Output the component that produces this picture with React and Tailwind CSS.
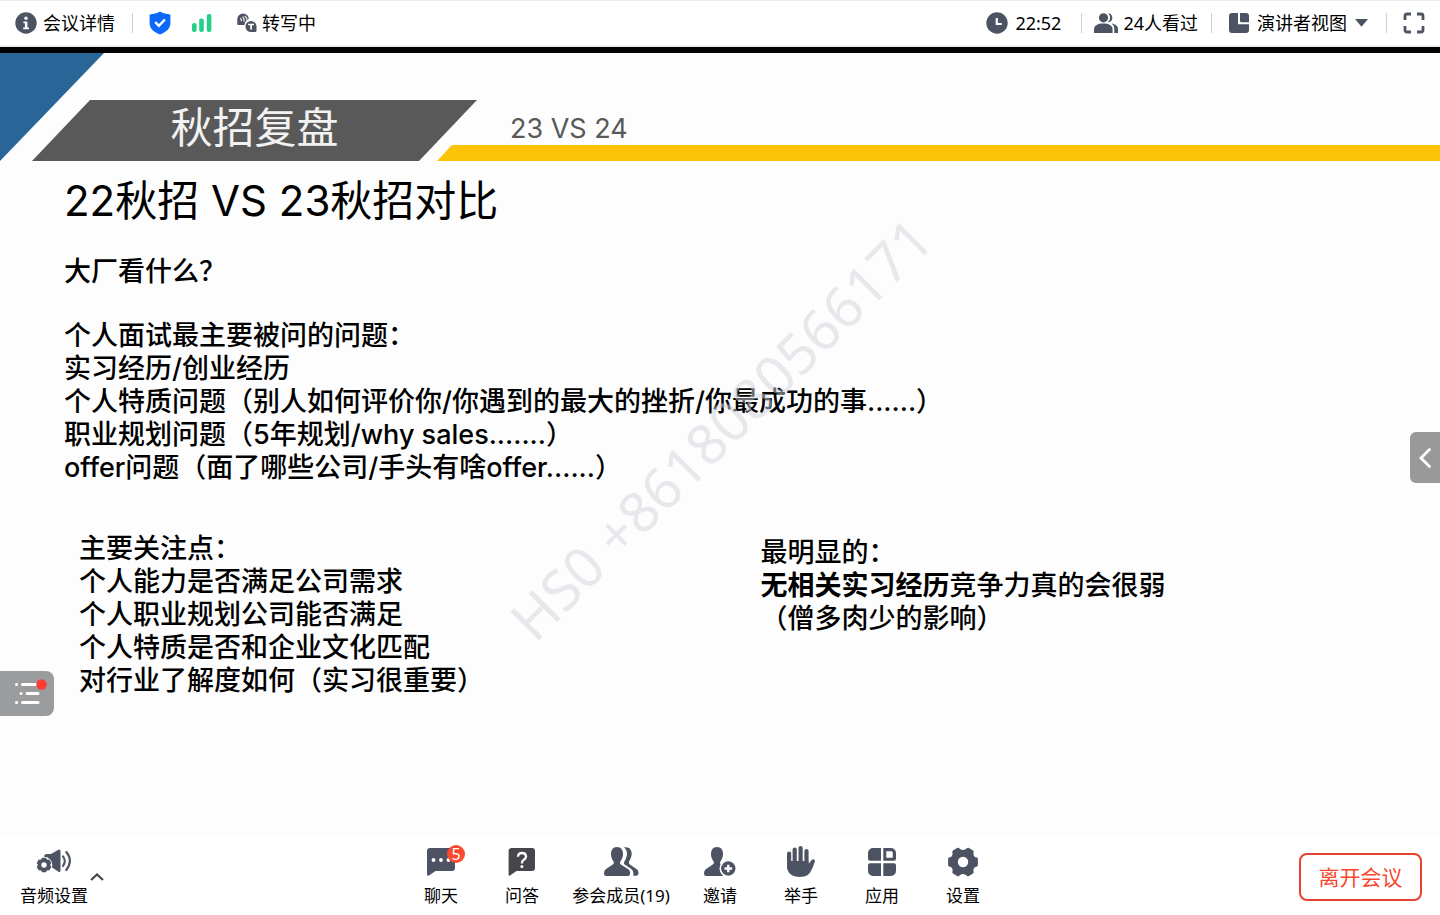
const ink = '#4d5362'

function InfoIcon() {
  return (
    <svg width="22" height="22" viewBox="0 0 22 22" aria-hidden="true">
      <circle cx="11" cy="11" r="10.7" fill={ink} />
      <circle cx="11" cy="6.3" r="1.7" fill="#fff" />
      <path d="M8.4 9.4h4v6h1.6v1.8H8.2v-1.8h1.7v-4.2H8.4z" fill="#fff" />
    </svg>
  )
}

function ShieldIcon() {
  return (
    <svg width="22" height="24" viewBox="0 0 22 24" aria-hidden="true">
      <path d="M11 .5C8.200 2.300 4.500 3.200 1.500 3.300Q.6 3.400.6 4.300V12c0 6 4.200 9 10.400 11.500C17.200 21 21.400 18 21.400 12V4.300q0-.9-.9-1C17.500 3.200 13.800 2.300 11 .5z" fill="#0b68fb" />
      <path d="M6.200 11.200l3.700 3.600 6-6.300" fill="none" stroke="#fff" strokeWidth="2.400" />
    </svg>
  )
}

function SignalIcon() {
  return (
    <svg width="22" height="20" viewBox="0 0 22 20" fill="#25cf88" aria-hidden="true">
      <rect x="1" y="10" width="4.600" height="9" rx="2" />
      <rect x="8.200" y="5.500" width="4.600" height="13.500" rx="2" />
      <rect x="15.800" y="1" width="4.600" height="18" rx="2" />
    </svg>
  )
}

function TranscribeIcon() {
  return (
    <svg width="20" height="20" viewBox="0 0 20 20" aria-hidden="true">
      <path d="M6 .5a5.700 5.700 0 0 1 5.800 5.500q-3.700 1.300-4.300 6H1.200Q.3 12 .3 11V6.200A5.700 5.700 0 0 1 6 .5z" fill={ink} />
      <path d="M3.600 5l1 3.200M5.600 3.600q2 2 1.400 5M7.800 2.800q2.200 2 2.200 4" fill="none" stroke="#fff" strokeWidth="1.100" />
      <path d="M14 8a5.500 5.500 0 0 1 5.500 5.500V18q0 1-1 1H14a5.500 5.500 0 0 1 0-11z" fill={ink} />
      <path d="M11.200 11.500h5.800M14.100 11.500v5" stroke="#fff" strokeWidth="1.700" />
    </svg>
  )
}

function ClockIcon() {
  return (
    <svg width="22" height="22" viewBox="0 0 22 22" aria-hidden="true">
      <circle cx="11" cy="11" r="10.700" fill={ink} />
      <path d="M10.800 6v6h5" fill="none" stroke="#fff" strokeWidth="2.200" />
    </svg>
  )
}

function ViewersIcon() {
  return (
    <svg width="24" height="20" viewBox="0 0 24 20" fill={ink} aria-hidden="true">
      <circle cx="9.500" cy="4.800" r="4.600" />
      <path d="M0 20v-3.500C0 12.500 4 10.600 9.300 10.600s9.300 1.900 9.300 5.900V20z" />
      <path d="M14.300.3a4.500 4.500 0 0 1 1.700 8.400q-1 .6-2.400.6 2.900-2.200 2.500-5.200Q15.800 1.700 14.300.3zM17.500 10.300Q24 11.800 24 16v4h-3.700v-4q0-3.500-2.800-5.700z" />
    </svg>
  )
}

function LayoutIcon() {
  return (
    <svg width="20" height="20" viewBox="0 0 20 20" fill={ink} aria-hidden="true">
      <path d="M3 0h6v11.300h11V17a3 3 0 0 1-3 3H3a3 3 0 0 1-3-3V3a3 3 0 0 1 3-3z" />
      <path d="M11 0h6a3 3 0 0 1 3 3v6.300h-7.500A1.500 1.500 0 0 1 11 7.800z" />
    </svg>
  )
}

function FullscreenIcon() {
  return (
    <svg width="22" height="22" viewBox="0 0 22 22" fill="none" stroke={ink} strokeWidth="2.800" aria-hidden="true">
      <path d="M8 2H4Q2 2 2 4v4M14 2h4q2 0 2 2v4M8 20H4q-2 0-2-2v-4M14 20h4q2 0 2-2v-4" />
    </svg>
  )
}

// Six-toothed gear with flat teeth.
function gearPath(cx, cy, outer, inner, start) {
  const pts = []
  for (let i = 0; i < 6; i++) {
    const base = start + (i * Math.PI) / 3
    const steps = [[-0.34, inner], [-0.24, outer], [0.24, outer], [0.34, inner]]
    for (const [d, r] of steps) {
      pts.push(`${(cx + Math.cos(base + d) * r).toFixed(2)} ${(cy + Math.sin(base + d) * r).toFixed(2)}`)
    }
  }
  return `M${pts.join('L')}Z`
}

function AudioIcon() {
  return (
    <svg width="36" height="26" viewBox="0 0 36 26" aria-hidden="true">
      <path d="M11 5h4l7.500-4.200Q24.500 0 24.500 2.300V21.500q0 2.300-2 1.200L17 19 8 14V8q0-3 3-3z" fill={ink} />
      <circle cx="8" cy="16" r="8.300" fill="#fff" />
      <path d={gearPath(8, 16, 6.8, 5.8, Math.PI / 6)} fill={ink} stroke={ink} strokeWidth="1.400" strokeLinejoin="round" />
      <circle cx="8" cy="16" r="2.700" fill="#fff" />
      <path d="M27 7.300q3.600 4.600 0 9.700M30.300 3q7.200 8.500 0 18" fill="none" stroke={ink} strokeWidth="2.100" strokeLinecap="round" />
    </svg>
  )
}

function ChatIcon() {
  return (
    <svg width="28" height="28" viewBox="0 0 28 28" aria-hidden="true">
      <path d="M3 0h22a3 3 0 0 1 3 3v17a3 3 0 0 1-3 3H8.500L2 27.500Q0 28.500 0 26V3a3 3 0 0 1 3-3z" fill={ink} />
      <g fill="#fff"><circle cx="6.500" cy="12" r="1.900" /><circle cx="14" cy="12" r="1.900" /><circle cx="21.500" cy="12" r="1.900" /></g>
    </svg>
  )
}

function QuestionIcon() {
  return (
    <svg width="28" height="28" viewBox="0 0 28 28" aria-hidden="true">
      <path d="M3 0h21a3 3 0 0 1 3 3v17a3 3 0 0 1-3 3H8.500L2 27.500Q.6 28.500.6 26V3A3 3 0 0 1 3 0z" fill="#45474d" />
      <path d="M10 8.700q.2-3.700 4-3.700t4 3.400q0 2-2.200 3.300-2 1.200-1.900 3.800" fill="none" stroke="#fff" strokeWidth="2.300" />
      <circle cx="13.900" cy="18.400" r="1.500" fill="#fff" />
    </svg>
  )
}

const person = 'M13 0c4 0 6 2.800 6 7 0 3-1 5.500-2.500 7.300-.8 1.100-.6 2.600.6 3.400l7 4.200q2 1.300 2 3.600 0 3.500-2 3.500H2q-2 0-2-3 0-2.600 2-4l6.800-4.500c1.200-.8 1.400-2.200.6-3.300C8 12.500 7 10 7 7c0-4.200 2-7 6-7z'

function MembersIcon() {
  return (
    <svg width="35" height="29" viewBox="0 0 35 29" fill={ink} aria-hidden="true">
      <path d={person} />
      <path d="M20 .3c5.500-.8 7.700 2.300 7.700 6.500 0 3-1.200 5.200-2.500 7.400-.7 1.300-.3 2.600.7 3.300l6.600 4.400q2 1.400 2 3.600 0 3.300-2 3.300h-3.300q1-5-2.700-7.300l-5.500-3.700c-1.200-.8-1.400-2-.6-3.300 2.600-4 4.400-10.200-.4-14.200z" />
    </svg>
  )
}

function InviteIcon() {
  return (
    <svg width="32" height="29" viewBox="0 0 32 29" aria-hidden="true">
      <path d={person} fill={ink} />
      <circle cx="24.300" cy="21.500" r="8.800" fill="#fff" />
      <circle cx="24.300" cy="21.500" r="7.200" fill={ink} />
      <path d="M24.300 17.700v7.600M20.500 21.500h7.600" stroke="#fff" strokeWidth="2.400" />
    </svg>
  )
}

function HandIcon() {
  return (
    <svg width="28" height="31" viewBox="0 0 28 31" fill={ink} aria-hidden="true">
      <rect x="0" y="5.500" width="4.200" height="18" rx="2.100" />
      <rect x="5.600" y="1.500" width="4.200" height="20" rx="2.100" />
      <rect x="11.500" y="0" width="4.200" height="20" rx="2.100" />
      <rect x="17.400" y="3" width="4.200" height="18" rx="2.100" />
      <path d="M0 15h21.600v3l3-4q1.500-1.300 2.800-.3 1 1 .2 2.500-2.600 8-5.500 11.500Q19 31 12 31 0 30 0 20z" />
    </svg>
  )
}

function AppsIcon() {
  return (
    <svg width="28" height="28" viewBox="0 0 28 28" fill={ink} aria-hidden="true">
      <path d="M5 0h8v12.800H2Q0 12.800 0 10.800V5a5 5 0 0 1 5-5zM2 15.300h11V28H5a5 5 0 0 1-5-5v-5.700q0-2 2-2zM15.300 15.300H26q2 0 2 2V23a5 5 0 0 1-5 5h-7.700z" />
      <path fillRule="evenodd" d="M15.300 0H23a5 5 0 0 1 5 5v5.800q0 2-2 2H15.300zM18.300 3.200v6.600h6.500V4.700q0-1.500-1.500-1.500z" />
    </svg>
  )
}

function GearIcon() {
  return (
    <svg width="30" height="30" viewBox="0 0 30 30" aria-hidden="true">
      <path d="M9.500.8Q10.500.4 11.200 1.300Q12.500 3 15 3T18.800 1.300Q19.500.4 20.500.8L25 3.400Q26 4 25.600 5.200Q24.900 7.500 26 9T29 10.600Q29.900 11 29.900 12V18Q29.900 19 29 19.400Q27 19.600 26 21T25.600 24.800Q26 26 25 26.600L20.500 29.200Q19.500 29.600 18.800 28.700Q17.500 27 15 27T11.200 28.700Q10.500 29.600 9.500 29.200L5 26.600Q4 26 4.400 24.800Q5.100 22.500 4 21T1 19.400Q.1 19 .1 18V12Q.1 11 1 10.600Q3 10.400 4 9T4.400 5.200Q4 4 5 3.400Z" fill={ink} />
      <circle cx="15" cy="15" r="5.200" fill="#fff" />
    </svg>
  )
}

function Divider() {
  return <span className="h-5 w-px bg-[#cdd1d8]" />
}

const tools = [
  { label: '聊天', Icon: ChatIcon, badge: '5' },
  { label: '问答', Icon: QuestionIcon },
  { label: '参会成员(19)', Icon: MembersIcon, wide: true },
  { label: '邀请', Icon: InviteIcon },
  { label: '举手', Icon: HandIcon },
  { label: '应用', Icon: AppsIcon },
  { label: '设置', Icon: GearIcon },
]

function TopBar() {
  return (
    <header className="flex h-[47px] items-center justify-between border-t border-b-2 border-[#ededf2] bg-white pr-[15px] pb-px pl-[15px] text-lg leading-6">
      <div className="flex items-center">
        <button className="flex items-center gap-[6px]"><InfoIcon />会议详情</button>
        <span className="ml-[17px] flex"><Divider /></span>
        <button aria-label="安全" className="ml-4"><ShieldIcon /></button>
        <button aria-label="网络" className="ml-5"><SignalIcon /></button>
        <button className="ml-6 flex items-center gap-[5px]"><TranscribeIcon />转写中</button>
      </div>
      <div className="flex items-center">
        <span className="flex items-center gap-[7px]"><ClockIcon />22:52</span>
        <span className="ml-5 flex"><Divider /></span>
        <button className="ml-3 flex items-center gap-[5px]"><ViewersIcon />24人看过</button>
        <span className="ml-[13px] flex"><Divider /></span>
        <button className="ml-[17px] flex items-center gap-2">
          <LayoutIcon />演讲者视图
          <svg width="13" height="8" viewBox="0 0 13 8" aria-hidden="true"><path d="M0 0h13L6.500 7.800z" fill={ink} /></svg>
        </button>
        <span className="ml-[18px] flex"><Divider /></span>
        <button aria-label="全屏" className="ml-4"><FullscreenIcon /></button>
      </div>
    </header>
  )
}

function SlideHeader() {
  return (
    <div className="flex h-[108px] items-end">
      <div className="h-full w-[104px] shrink-0 bg-[#2a6597] [clip-path:polygon(0_0,100%_0,0_100%)]" />
      <div className="-ml-[72px] flex h-[61px] w-[445px] shrink-0 items-center justify-center bg-[#595959] pb-[6px] text-[42px] font-normal text-[#f2f2f2] [clip-path:polygon(58px_0,100%_0,387px_100%,0_100%)]">
        <h1>秋招复盘</h1>
      </div>
      <div className="-ml-10 flex flex-1 flex-col">
        <p className="pl-[73px] text-[27px] leading-[33px] font-normal text-[#595959]">23 VS 24</p>
        <div className="h-4 bg-[#fdc306] [clip-path:polygon(15px_0,100%_0,100%_100%,0_100%)]" />
      </div>
    </div>
  )
}

function Slide() {
  return (
    <main className="relative flex-1 overflow-hidden border-t-[6px] border-black bg-[#fdfdfd] font-['Inter','Noto_Sans_CJK_SC',sans-serif] text-[27px] leading-[33px] font-medium">
      <SlideHeader />
      <div className="pt-[10px] pl-16">
        <h2 className="text-[42px] leading-[60px] font-normal">22秋招 VS 23秋招对比</h2>
        <p className="mt-6">大厂看什么？</p>
        <div className="mt-[31px]">
          <p>个人面试最主要被问的问题：</p>
          <p>实习经历/创业经历</p>
          <p>个人特质问题（别人如何评价你/你遇到的最大的挫折/你最成功的事......）</p>
          <p>职业规划问题（5年规划/why sales.......）</p>
          <p>offer问题（面了哪些公司/手头有啥offer......）</p>
        </div>
      </div>
      <div className="mt-12 grid grid-cols-2 pl-[79px]">
        <div>
          <p>主要关注点：</p>
          <p>个人能力是否满足公司需求</p>
          <p>个人职业规划公司能否满足</p>
          <p>个人特质是否和企业文化匹配</p>
          <p>对行业了解度如何（实习很重要）</p>
        </div>
        <div className="mt-1 pl-px">
          <p>最明显的：</p>
          <p><strong>无相关实习经历</strong>竞争力真的会很弱</p>
          <p>（僧多肉少的影响）</p>
        </div>
      </div>
      <div className="pointer-events-none absolute top-[48%] left-1/2 -translate-x-1/2 -translate-y-1/2 -rotate-45 font-['Noto_Sans',sans-serif] text-[56px] leading-none font-normal whitespace-nowrap text-[#d0d3dc]/50">
        HS0 +8618080566171
      </div>
      <button aria-label="字幕列表" className="absolute bottom-[119px] left-0 flex h-[45px] w-[54px] items-center justify-center rounded-r-lg bg-[#9b9c9d]">
        <svg width="40" height="30" viewBox="0 0 40 30" aria-hidden="true">
          <g stroke="#fff" strokeWidth="3" strokeLinecap="round"><path d="M15.500 5.500h14M20 14.500h11M15.500 23.500h15.500M9.500 5.500h.1M14 14.500h.1M9.500 23.500h.1" /></g>
          <circle cx="34.500" cy="5.500" r="5.200" fill="#ff3b36" />
        </svg>
      </button>
      <button aria-label="展开侧栏" className="absolute right-0 bottom-[352px] flex h-[51px] w-[30px] items-center justify-center rounded-l-md bg-[#999]">
        <svg width="12" height="20" viewBox="0 0 12 20" aria-hidden="true"><path d="M10.500 1.500L2 10l8.500 8.500" fill="none" stroke="#fff" strokeWidth="2.800" strokeLinecap="round" /></svg>
      </button>
    </main>
  )
}

function BottomBar() {
  return (
    <footer className="grid h-20 grid-cols-[1fr_auto_1fr] items-center bg-white pt-[3px] text-[17px] leading-6">
      <div className="flex items-center pl-5">
        <button className="flex w-[68px] flex-col items-center gap-[6px]">
          <span className="flex h-8 items-center"><AudioIcon /></span>音频设置
        </button>
        <button aria-label="音频选项" className="ml-[2px]">
          <svg width="14" height="8" viewBox="0 0 14 8" aria-hidden="true"><path d="M1 7l6-5.500L13 7" fill="none" stroke="#45474d" strokeWidth="2.200" /></svg>
        </button>
      </div>
      <nav className="flex gap-4 pr-9">
        {tools.map(({ label, Icon, badge, wide }) => (
          <button key={label} className={`flex flex-col items-center gap-[6px] ${wide ? 'w-[101px]' : 'w-[65px]'}`}>
            <span className="relative flex h-8 items-center">
              <Icon />
              {badge && (
                <span className="absolute -top-px -right-[10px] flex size-[18px] items-center justify-center rounded-full bg-[#fb4a2f] text-base leading-none text-white">{badge}</span>
              )}
            </span>
            {label}
          </button>
        ))}
      </nav>
      <button className="mr-[18px] h-12 w-[123px] justify-self-end rounded-lg border-2 border-[#e8412f] text-[21px] text-[#f8472c]">离开会议</button>
    </footer>
  )
}

export default function App() {
  return (
    <div className="flex min-h-screen flex-col bg-white font-['Noto_Sans','Noto_Sans_CJK_SC',sans-serif] text-black">
      <TopBar />
      <Slide />
      <BottomBar />
    </div>
  )
}
